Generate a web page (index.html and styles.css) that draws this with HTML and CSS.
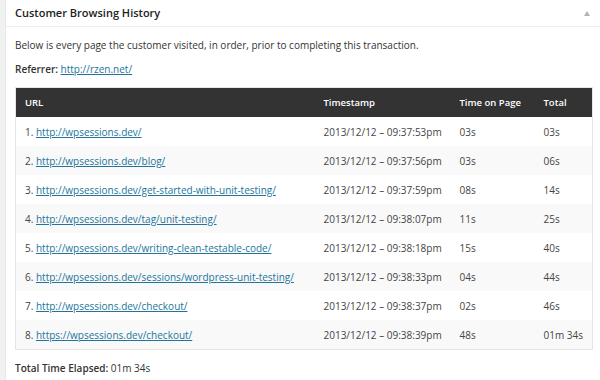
FILE: index.html
```html
<!DOCTYPE html>
<html>
<head>
<meta charset="utf-8">
<link rel="stylesheet" href="styles.css">
</head>
<body>
<div class="page">
  <div class="gutter"></div>
  <div class="box">
    <div class="box-head">
      <h3 class="box-title">Customer Browsing History</h3>
      <span class="toggle"></span>
    </div>
    <div class="box-body">
      <p class="intro">Below is every page the customer visited, in order, prior to completing this transaction.</p>
      <p class="ref"><strong>Referrer:</strong> <a href="#">http://rzen.net/</a></p>
      <table class="hist">
        <colgroup><col class="c-url"><col class="c-ts"><col class="c-top"><col class="c-tot"></colgroup>
        <thead>
          <tr><th>URL</th><th>Timestamp</th><th>Time on Page</th><th>Total</th></tr>
        </thead>
        <tbody>
          <tr><td>1. <a href="#">http://wpsessions.dev/</a></td><td>2013/12/12 – 09:37:53pm</td><td>03s</td><td>03s</td></tr>
          <tr><td>2. <a href="#">http://wpsessions.dev/blog/</a></td><td>2013/12/12 – 09:37:56pm</td><td>03s</td><td>06s</td></tr>
          <tr><td>3. <a href="#">http://wpsessions.dev/get-started-with-unit-testing/</a></td><td>2013/12/12 – 09:37:59pm</td><td>08s</td><td>14s</td></tr>
          <tr><td>4. <a href="#">http://wpsessions.dev/tag/unit-testing/</a></td><td>2013/12/12 – 09:38:07pm</td><td>11s</td><td>25s</td></tr>
          <tr><td>5. <a href="#">http://wpsessions.dev/writing-clean-testable-code/</a></td><td>2013/12/12 – 09:38:18pm</td><td>15s</td><td>40s</td></tr>
          <tr><td>6. <a href="#">http://wpsessions.dev/sessions/wordpress-unit-testing/</a></td><td>2013/12/12 – 09:38:33pm</td><td>04s</td><td>44s</td></tr>
          <tr><td>7. <a href="#">http://wpsessions.dev/checkout/</a></td><td>2013/12/12 – 09:38:37pm</td><td>02s</td><td>46s</td></tr>
          <tr><td>8. <a href="#">https://wpsessions.dev/checkout/</a></td><td>2013/12/12 – 09:38:39pm</td><td>48s</td><td>01m 34s</td></tr>
        </tbody>
      </table>
      <p class="elapsed"><strong>Total Time Elapsed:</strong> 01m 34s</p>
    </div>
  </div>
</div>
</body>
</html>
```

FILE: styles.css
```css
html, body {
  margin: 0;
  padding: 0;
  background: #ffffff;
}
body {
  font-family: "Open Sans", "Liberation Sans", sans-serif;
  font-size: 10px;
  color: #444;
}
.page {
  display: flex;
  width: 600px;
  height: 380px;
  overflow: hidden;
}
.gutter {
  width: 5px;
  flex: none;
  background: #f1f1f1;
  border-right: 1px solid #e8e8e8;
}
.box {
  flex: 1;
  background: #fff;
}
.box-head {
  height: 26px;
  border-bottom: 1px solid #eeeeee;
  display: flex;
  align-items: center;
  justify-content: space-between;
  padding: 0 10px 0 9px;
}
.box-title {
  margin: 0;
  font-size: 11px;
  font-weight: 600;
  color: #222;
  line-height: 26px;
}
.toggle {
  width: 0;
  height: 0;
  border-left: 3px solid transparent;
  border-right: 3px solid transparent;
  border-bottom: 5px solid #b4b4b4;
}
.box-body {
  padding: 0 0 0 9px;
}
.intro {
  margin: 10px 0 0;
  font-size: 10px;
  line-height: 16px;
  color: #333;
}
.ref {
  margin: 8px 0 0;
  font-size: 10px;
  line-height: 16px;
  color: #333;
}
strong {
  font-weight: 600;
}
a {
  color: #21759b;
  text-decoration: underline;
}
.hist {
  margin-top: 10px;
  width: 577px;
  table-layout: fixed;
  border-collapse: collapse;
  border: 1px solid #e5e5e5;
  font-size: 10px;
  white-space: nowrap;
}
.hist th {
  background: #333;
  color: #fff;
  font-weight: 600;
  text-align: left;
  height: 29px;
  padding: 0 0 0 9px;
  font-size: 9.5px;
}
.hist td {
  height: 29px;
  padding: 0 0 0 9px;
  color: #444;
}
.hist tbody tr:nth-child(even) td {
  background: #f9f9f9;
}
.c-url { width: 299px; }
.c-ts { width: 136px; }
.c-top { width: 84px; }
.c-tot { width: 58px; }
.elapsed {
  margin: 10px 0 0;
  font-size: 10px;
  line-height: 16px;
  color: #333;
}
```
